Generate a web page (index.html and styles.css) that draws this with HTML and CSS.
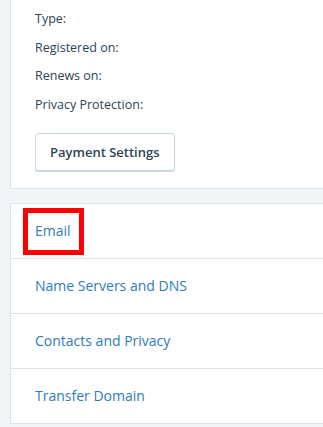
FILE: index.html
```html
<!DOCTYPE html>
<html lang="en">
<head>
  <meta charset="UTF-8" />
  <title>Domain Settings</title>
  <link rel="stylesheet" href="styles.css">
</head>
<body>
  <div class="page">
    <div class="card details">
      <ul class="props">
        <li>Type:</li>
        <li>Registered on:</li>
        <li>Renews on:</li>
        <li>Privacy Protection:</li>
      </ul>
      <button class="button" type="button">Payment Settings</button>
    </div>

    <div class="card nav">
      <a class="nav-item" href="#"><span class="highlight">Email</span></a>
      <a class="nav-item" href="#">Name Servers and DNS</a>
      <a class="nav-item" href="#">Contacts and Privacy</a>
      <a class="nav-item" href="#">Transfer Domain</a>
    </div>
  </div>
</body>
</html>
```

FILE: styles.css
```css
body {
  margin: 0;
  background: #f3f6f8;
  font-family: 'Open Sans', 'Noto Sans', sans-serif;
  color: #2e4453;
}

.page {
  padding-left: 10px;
  display: flex;
  flex-direction: column;
  gap: 14px;
}

.card {
  background: #fff;
  border: 1px solid #dce4ea;
  border-right: none;
}

.details {
  border-top: none;
  padding: 5px 24px 16px;
}

.props {
  list-style: none;
  margin: 0 0 13px;
  padding: 0;
  font-size: 12.5px;
}

.props li {
  line-height: 28.7px;
}

.button {
  font-family: inherit;
  font-size: 13px;
  font-weight: 600;
  color: #2e4453;
  background: #fff;
  border: 1px solid #c8d7e1;
  border-bottom-width: 2px;
  border-radius: 4px;
  height: 39px;
  padding: 0 14px;
  cursor: pointer;
}

.nav {
  display: flex;
  flex-direction: column;
}

.nav-item {
  display: block;
  padding: 0 24px;
  line-height: 54px;
  font-size: 14px;
  color: #2d7db7;
  text-decoration: none;
  border-top: 1px solid #dce4ea;
}

.nav-item:first-child {
  border-top: none;
}

.highlight {
  position: relative;
}

.highlight::after {
  content: "";
  position: absolute;
  left: -12px;
  right: -13px;
  top: -13px;
  height: 47px;
  box-sizing: border-box;
  border: 5px solid #f00;
}
```
